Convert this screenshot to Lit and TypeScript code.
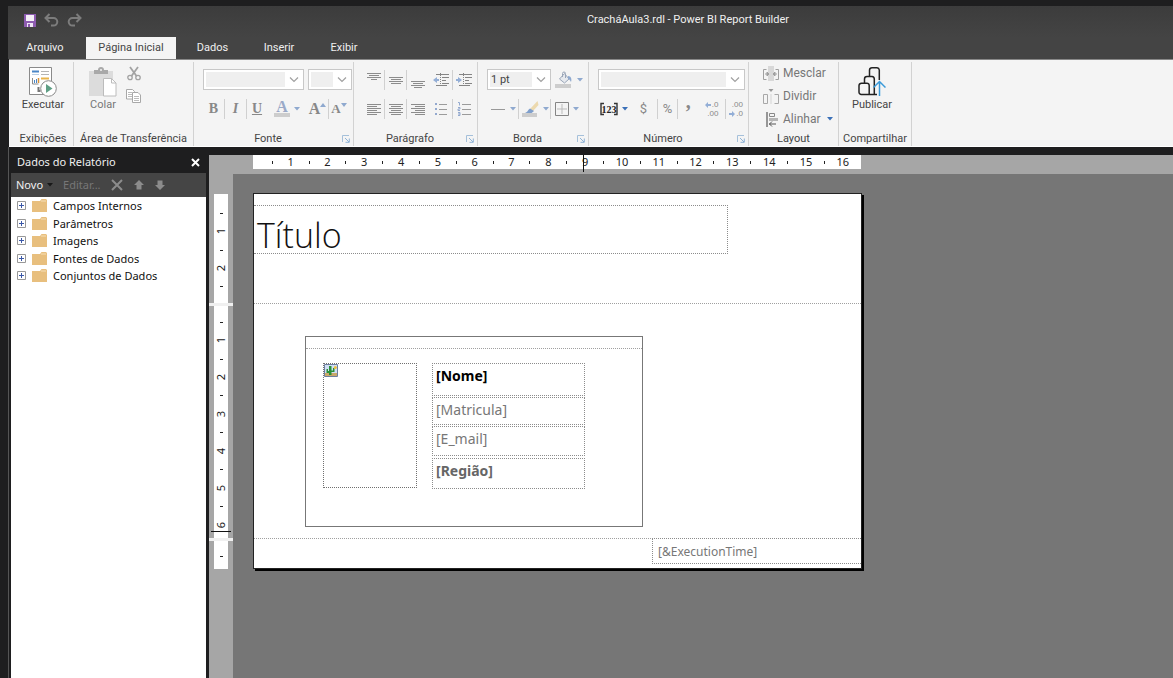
import { LitElement, html, svg, css, nothing } from "lit";
import { customElement, property } from "lit/decorators.js";

const caret = (on = false) =>
  html`<svg class=${on ? "caret on" : "caret"} width="6" height="4" viewBox="0 0 6 4" aria-hidden="true"><path d="M0 0h6L3 3.5z" /></svg>`;

const icon = (w: number, h: number, body: unknown) =>
  html`<svg width=${w} height=${h} viewBox="0 0 ${w} ${h}" fill="none" aria-hidden="true">${body}</svg>`;

const lines = (rows: Array<[number, number, number]>) =>
  icon(16, 16, rows.map(([y, x1, x2]) => svg`<path d="M${x1} ${y}.5H${x2}" stroke="#8c8c8c" />`));

const icons = {
  save: icon(12, 13, svg`<path d="M0 0h12v13H0z" fill="#8d5bb0"/><path d="M2 1h8v6H2z" fill="#f5f0f8"/><path d="M3 9h6v4H3z" fill="#efe6f5"/><path d="M4 10h2v3H4z" fill="#8d5bb0"/>`),
  undo: icon(15, 14, svg`<path d="M5.500 1 1.500 5l4 4M2 5h7.500a3.800 3.800 0 0 1 0 7.600H7" stroke="#7c7c7c" stroke-width="2"/>`),
  redo: icon(15, 14, svg`<path d="M9.500 1l4 4-4 4M13 5H5.500a3.800 3.800 0 0 0 0 7.600H8" stroke="#7c7c7c" stroke-width="2"/>`),
  run: icon(28, 30, svg`<path d="M.5.5h22v27H.5z" fill="#fff" stroke="#8a8a8a"/><path d="M3 4.500h7" stroke="#4a86c7" stroke-width="2"/><path d="M3 7.500h7" stroke="#b8cfe8"/><path d="M12 4.500h8M12 7.500h8" stroke="#b5b5b5"/><path d="M3.500 11v6h6" stroke="#8a8a8a"/><path d="M5.500 16v-3M7.500 16v-4" stroke="#4a86c7"/><path d="M9.500 16v-5" stroke="#d9923a" stroke-width="1.500"/><path d="M12 11.500h8" stroke="#e9b44c" stroke-width="2"/><path d="M9.500 20v4h2" stroke="#777" stroke-width="2"/><circle cx="19.500" cy="21.500" r="7.800" fill="#fff" stroke="#8a8a8a"/><path d="M17 17v9l6.500-4.500z" fill="#5f9f86"/>`),
  paste: icon(28, 30, svg`<path d="M0 4h24v25H0z" fill="#dcdcdc"/><path d="M5 3h4a3 3 0 0 1 6 0h4v4H5z" fill="#a9a9a9"/><circle cx="12" cy="3" r="1" fill="#f4f4f4"/><path d="M14.500 11.500h8l4.500 4.500v13H14.500z" fill="#fff" stroke="#bcbcbc"/><path d="M22.500 11.500V16H27" stroke="#bcbcbc"/>`),
  cut: icon(14, 15, svg`<path d="M3 1l6.500 9M11 1L4.500 10" stroke="#a2a2a2" stroke-width="1.800"/><circle cx="3" cy="11.500" r="2.200" stroke="#a2a2a2" stroke-width="1.300"/><circle cx="11" cy="11.500" r="2.200" stroke="#a2a2a2" stroke-width="1.300"/>`),
  copy: icon(16, 14, svg`<path d="M.5.5h6l2 2v7.500h-8z" fill="#fff" stroke="#a8a8a8"/><path d="M2 3.500h4M2 5.500h4M2 7.500h4" stroke="#bcbcbc"/><path d="M6.500 3.500h5.500l2.500 2.500v7.500h-8z" fill="#fff" stroke="#a8a8a8"/><path d="M8 7.500h5M8 9.500h5M8 11.500h5" stroke="#bcbcbc"/>`),
  launcher: icon(8, 8, svg`<path d="M.5 7V.5H7" stroke="#a5c0da"/><path d="M3 3l4 4M7.300 3.500v3.800H3.500" stroke="#8fb3d6"/>`),
  top: lines([[1, 1, 15], [3, 3, 13], [5, 1, 15], [7, 5, 11]]),
  middle: lines([[5, 1, 15], [7, 3, 13], [9, 1, 15], [11, 3, 13]]),
  bottom: lines([[9, 1, 15], [11, 3, 13], [13, 1, 15], [15, 4, 12]]),
  left: lines([[3, 1, 15], [5, 1, 11], [7, 1, 15], [9, 1, 11], [11, 1, 15], [13, 1, 11]]),
  center: lines([[3, 1, 15], [5, 3, 13], [7, 1, 15], [9, 3, 13], [11, 1, 15], [13, 3, 13]]),
  right: lines([[3, 1, 15], [5, 5, 15], [7, 1, 15], [9, 5, 15], [11, 1, 15], [13, 5, 15]]),
  outdent: icon(16, 16, svg`<path d="M3 2.500h13M9 5.500h7M9 8.500h4M9 11.500h7M3 13.500h11" stroke="#858585"/><path d="M7.500 1v14" stroke="#858585" stroke-dasharray="1 1"/><path d="M0 8l4-3v2h2v2H4v2z" fill="#93aed6"/>`),
  indent: icon(16, 16, svg`<path d="M3 2.500h13M9 5.500h7M9 8.500h4M9 11.500h7M3 13.500h11" stroke="#858585"/><path d="M7.500 1v14" stroke="#858585" stroke-dasharray="1 1"/><path d="M6 8L2 5v2H0v2h2v2z" fill="#93aed6"/>`),
  bullets: icon(14, 14, svg`<path d="M1 1h2v2H1zM1 6h2v2H1zM1 11h2v2H1z" fill="#93a9cf"/><path d="M5 2.500h8M5 7.500h8M5 12.500h8" stroke="#9b9b9b"/>`),
  numbers: icon(14, 14, svg`<path d="M1 .5h1.500v3M1 5.500h2v1.500H1v1.500h2M1 10.500h2v3H1M1 12h2" stroke="#93a9cf"/><path d="M5 2.500h9M5 7.500h9M5 12.500h9" stroke="#9b9b9b"/>`),
  fill: icon(18, 17, svg`<path d="M4.500 8l5-5.500 4.500 5.500-4.500 4z" fill="#e6e9ee" stroke="#9aa6b8"/><path d="M7.500 6V2.500a1.500 1.500 0 0 1 3 0V7" stroke="#9aa6b8"/><path d="M13 5c3 0 4 3 3 6-1-2-2-3-3-3z" fill="#8fa9cf"/><path d="M0 13h16v4H0z" fill="#cdcdcd"/>`),
  line: icon(16, 16, svg`<path d="M1 8.500h14" stroke="#999"/>`),
  pen: icon(18, 17, svg`<path d="M16.500 0l1 4-5.500 6-3-2z" fill="#ecd9ae"/><path d="M9 7.500l4 2.500c-2 2.500-5 3-9 2 3-1 3-3.500 5-4.500z" fill="#7f9fcc"/><path d="M1 12h15v4H1z" fill="#cdcdcd"/>`),
  borders: icon(14, 14, svg`<path d="M.5.5h13v13H.5z" stroke="#858585"/><path d="M7 2v10M2 7h10" stroke="#bbb"/>`),
  bracket: icon(18, 14, svg`<path d="M4 1.500H1v11h3M14 1.500h3v11h-3" stroke="#333" stroke-width="1.400"/><text x="9" y="11" text-anchor="middle" font-family="Liberation Serif, serif" font-weight="700" font-size="10" fill="#222">123</text>`),
  moreLeft: icon(6, 6, svg`<path d="M0 3l3-3v2h3v2H3v2z" fill="#93aed6"/>`),
  moreRight: icon(6, 6, svg`<path d="M6 3L3 0v2H0v2h3v2z" fill="#93aed6"/>`),
  merge: icon(16, 15, svg`<path d="M5 0h6v15H5z" fill="#d8d8d8"/><path d="M3.500 3.500h-3v10h3M12.500 3.500h3v10h-3" stroke="#a0a0a0"/><path d="M2 8h3M14 8h-3M4 6l2 2-2 2zM12 6l-2 2 2 2z" fill="#a0a0a0" stroke="#a0a0a0"/>`),
  split: icon(16, 15, svg`<path d="M.5 5.500h4v9h-4zM11.500 14.500h4v-9h-4" stroke="#a8a8a8"/><path d="M5.500 0h5L8 3z" fill="#999"/><path d="M8 5v10" stroke="#d4d4d4"/>`),
  align: icon(16, 15, svg`<path d="M4 0v15" stroke="#777" stroke-width="1.500"/><path d="M6.500 1.500h5v3h-5z" stroke="#888"/><path d="M6 6h9v3H6z" fill="#b5b5b5"/><path d="M6 12h7M9 9.500L6.500 12 9 14.500" stroke="#555"/>`),
  publish: icon(28, 30, svg`<path d="M11.500 10V3A2.500 2.500 0 0 1 14 .8h5A2.500 2.500 0 0 1 21.300 3v10M6.500 16.500v-4.500A2.500 2.500 0 0 1 9 9.500h5A2.500 2.500 0 0 1 16.300 12v15.300M11.200 27.500v-9a2.300 2.300 0 0 0-2.300-2.200H3.500A2.500 2.500 0 0 0 1 18.500V25a2.300 2.300 0 0 0 2.500 2.500H19" stroke="#222" stroke-width="1.500"/><path d="M21.500 29V14.500M15.500 20.500l6-6 6 6" stroke="#3a9ad9" stroke-width="1.500"/>`),
  remove: icon(12, 12, svg`<path d="M1 1l10 10M11 1L1 11" stroke="#8c8c8c" stroke-width="2"/>`),
  up: icon(10, 10, svg`<path d="M5 0l5 5H7.500v4.500h-5V5H0z" fill="#8c8c8c"/>`),
  down: icon(10, 10, svg`<path d="M5 10l5-5H7.500V.5h-5V5H0z" fill="#8c8c8c"/>`),
  close: icon(9, 9, svg`<path d="M1 1l7 7M8 1L1 8" stroke="#fff" stroke-width="2"/>`),
  plus: icon(9, 9, svg`<path d="M.5.5h8v8h-8z" fill="#fff" stroke="#989898"/><path d="M2 4.500h5M4.500 2v5" stroke="#3b58a8"/>`),
  folder: icon(15, 13, svg`<path d="M0 2h8l1.500-2H14l1 1v12H0z" fill="#e8bf7e"/><path d="M9 2h5" stroke="#f6dfb6"/>`),
  image: icon(14, 13, svg`<path d="M.5.5h13v12H.5z" fill="#cfe0f5" stroke="#6f7f9f"/><path d="M1 9h12v3H1z" fill="#c9a86a"/><path d="M5 2h2.500v9H5zM2.500 5H4v2h1v2H2.500zM9 4h1.500v4H7V6.500h2z" fill="#2a9038"/><circle cx="11.300" cy="3.500" r="1.500" fill="#f0c040"/>`),
};

@customElement("rb-combo")
class RbCombo extends LitElement {
  @property() label = "";
  @property() value = "";
  static styles = css`
    :host { display: grid; height: 21px; box-sizing: border-box; border: 1px solid #c8c8c8; background: #fff; align-items: center; }
    select { grid-area: 1 / 1; appearance: none; box-sizing: border-box; width: 100%; height: 19px; border: 2px solid #fff; border-right: 18px solid #fff; border-radius: 0; background: #efefef; font: inherit; color: #444; padding: 0 0 0 1px; margin: 0; min-width: 0; }
    svg { grid-area: 1 / 1; justify-self: end; margin-right: 4px; pointer-events: none; }
  `;
  render() {
    return html`<select aria-label=${this.label}><option>${this.value}</option></select>
      ${icon(10, 6, svg`<path d="M1 .5l4 4 4-4" stroke="#a0a0a0" stroke-width="1.200"/>`)}`;
  }
}

@customElement("rb-group")
class RbGroup extends LitElement {
  @property() label = "";
  @property({ type: Boolean }) launcher = false;
  static styles = css`
    :host { display: flex; flex-direction: column; flex: none; box-sizing: border-box; border-right: 1px solid #d2d2d2; margin-top: 2px; }
    .content { flex: 1; min-height: 0; }
    .foot { display: flex; align-items: center; height: 14px; line-height: 14px; color: #444; white-space: nowrap; }
    .name { flex: 1; text-align: center; }
    button { display: flex; border: 0; padding: 0; margin: 0 3px 0 0; background: none; }
  `;
  render() {
    return html`<div class="content"><slot></slot></div>
      <div class="foot"><span class="name">${this.label}</span>
      ${this.launcher ? html`<button aria-label="Mais opções: ${this.label}">${icons.launcher}</button>` : nothing}</div>`;
  }
}

@customElement("rb-ruler")
class RbRuler extends LitElement {
  @property({ type: Number }) ticks = 0;
  @property({ type: Boolean, reflect: true }) vertical = false;
  static styles = css`
    :host { display: flex; background: #fff; color: #222; font-size: 11px; line-height: 14px; box-sizing: border-box; padding: 0 9px 0 10px; }
    :host([vertical]) { flex-direction: column; padding: 10px 0 7px; }
    .tick { flex: 1 1 0; min-width: 0; min-height: 0; display: flex; align-items: center; justify-content: center; }
    .dot { width: 1px; height: 3px; background: #222; }
    :host([vertical]) .dot { width: 3px; height: 1px; }
    :host([vertical]) .num { writing-mode: vertical-rl; transform: rotate(180deg); }
  `;
  render() {
    return Array.from({ length: this.ticks }, (_, i) =>
      html`<span class="tick">${i % 2 ? html`<span class="num">${(i + 1) / 2}</span>` : html`<span class="dot"></span>`}</span>`);
  }
}

@customElement("app-root")
class AppRoot extends LitElement {
  static styles = css`
    :host { display: flex; flex-direction: column; box-sizing: border-box; min-height: 100vh; padding: 6px 0 0 8px; background: #1e1e1f; font-family: "Noto Sans", "Open Sans", sans-serif; font-size: 11px; line-height: 16px; color: #444; overflow: hidden; }
    button { font: inherit; color: inherit; border: 0; padding: 0; margin: 0; background: none; display: flex; align-items: center; justify-content: center; }
    .chrome, .ribbon { font-family: Roboto, "Noto Sans", sans-serif; }
    .chrome { background: linear-gradient(#3c3c3c, #444 60%); color: #f0f0f0; }
    .title { display: flex; align-items: center; height: 28px; }
    .quick { display: flex; gap: 8px; width: 179px; padding-left: 16px; align-items: center; }
    .title h1 { flex: 1; margin: 0; text-align: center; font-size: 11px; font-weight: 400; }
    .tabs { display: flex; padding: 3px 0 0 0; }
    .tab { height: 22px; color: #f0f0f0; }
    .file { width: 74px; margin-right: 4px; }
    .tab.on { width: 90px; background: #f4f4f4; color: #444; }
    .data { width: 73px; } .insert { width: 60px; } .view { width: 70px; }
    .ribbon { display: flex; height: 88px; box-sizing: border-box; background: #f4f4f4; border-top: 1px solid #888; border-bottom: 1px solid #fff; margin-left: 1px; }
    .g1 { width: 65px; padding-left: 4px; } .g2 { width: 120px; } .g3 { width: 160px; } .g4 { width: 124px; }
    .g5 { width: 111px; } .g6 { width: 160px; } .g7 { width: 90px; } .g8 { width: 73px; }
    .big { flex-direction: column; width: 100%; padding-top: 5px; }
    .g8 .big { padding-right: 6px; }
    .clip { display: flex; padding-left: 12px; gap: 6px; color: #777; }
    .clip .big { width: 34px; }
    .stack { display: flex; flex-direction: column; gap: 8px; padding-top: 4px; }
    .row { display: flex; align-items: center; }
    .combos { padding: 7px 0 0 9px; height: 21px; }
    .gapped { gap: 4px; }
    .tools { padding: 8px 0 0 9px; height: 22px; }
    .tool { height: 20px; gap: 4px; color: #888; }
    .sep { border-right: 1px solid #d0d0d0; box-sizing: border-box; }
    .serif { font-family: "Liberation Serif", serif; font-weight: 700; font-size: 14px; }
    .i { font-style: italic; } .u { text-decoration: underline; }
    .caret { fill: #8fa9cf; flex: none; } .caret.on { fill: #3a70b8; }
    .w20 { width: 20px; } .w22 { width: 22px; } .w24 { width: 24px; } .w28 { width: 28px; } .w32 { width: 32px; } .w40 { width: 40px; }
    .fontcolor { color: #9aa9c8; font-size: 16px; line-height: 12px; border-bottom: 4px solid #cdcdcd; padding: 0 2px; }
    .grow { font-size: 16px; } .shrink { font-size: 13px; }
    .grow, .shrink { gap: 0; }
    .mini { fill: #8fa9cf; align-self: flex-start; margin-top: 4px; flex: none; }
    .wide { width: 147px; } .font { width: 101px; } .size { width: 44px; } .point { width: 64px; }
    .sign { font-size: 13px; }
    .comma { font-size: 20px; line-height: 20px; padding-top: 6px; box-sizing: border-box; }
    .dec { display: flex; flex-direction: column; font-family: "Liberation Sans", sans-serif; font-size: 8px; line-height: 9px; }
    .dec span { display: flex; align-items: center; justify-content: flex-end; gap: 1px; }
    .layout { display: flex; flex-direction: column; gap: 3px; padding: 1px 0 0 14px; align-items: flex-start; }
    .layout button { height: 20px; gap: 4px; color: #777; font-size: 12px; }
    .body { display: flex; flex: 1; padding-top: 4px; border-left: 1px solid #555; }
    .panel { width: 195px; margin: 0 3px 0 2px; display: flex; flex-direction: column; flex: none; }
    .head { display: flex; justify-content: space-between; align-items: center; height: 22px; padding: 0 6px; color: #f0f0f0; }
    .head h2 { font-size: 11px; font-weight: 400; margin: 0; }
    .bar { display: flex; align-items: center; height: 24px; background: #454545; padding-left: 5px; color: #f0f0f0; }
    .bar button { margin-right: 11px; gap: 4px; }
    .bar button:first-child, .bar .off { margin-right: 10px; }
    .bar .off { color: #777; }
    .bar .caret { fill: #181818; }
    .tree { flex: 1; margin: 0; padding: 0 0 0 6px; background: #fff; color: #111; list-style: none; }
    .tree li { display: flex; align-items: center; height: 17px; line-height: 17px; padding-bottom: 1px; }
    .tree li:nth-child(2n) { padding-bottom: 0; }
    .tree li svg { margin-right: 6px; }
    .designer { flex: 1; display: grid; grid-template: 19px 1fr / 24px 1fr; background: #a6a6a6; margin-top: 4px; min-width: 0; }
    .hr { grid-area: 1 / 2; position: relative; padding-left: 20px; }
    .hr rb-ruler { width: 608px; height: 14px; }
    .vr { grid-area: 2 / 1; position: relative; padding: 20px 5px 0; }
    .seg1 { height: 109px; } .seg2 { height: 232px; } .seg3 { height: 28px; }
    .vr .seg2 { padding: 7px 0 4px; }
    .seg1, .seg2, .seg3 { width: 14px; }
    .gap { height: 3px; background: #f0f0f0; margin: 0 -5px; }
    .mx { position: absolute; left: 350px; top: 0; width: 1px; height: 17px; background: #111; }
    .my { position: absolute; top: 357px; left: 2px; width: 20px; height: 1px; background: #111; }
    .canvas { grid-area: 2 / 2; background: #767676; padding: 19px 0 0 20px; }
    .page { position: relative; width: 607px; height: 374px; border: 1px solid #222; background: #fff; box-shadow: 2px 2px 0 #000; color: #777; }
    .item, .rule { position: absolute; box-sizing: border-box; }
    .item { border: 1px dotted #8c8c8c; white-space: nowrap; }
    .rule { height: 0; border-top: 1px dotted #a0a0a0; left: 0; right: 0; }
    .heading { left: 0; top: 11px; width: 474px; height: 49px; border-left: 0; font: 300 34px/58px "Open Sans", sans-serif; color: #111; padding-left: 3px; }
    .r1 { top: 109px; } .r2 { top: 344px; } .r3 { top: 11px; }
    .card { left: 51px; top: 142px; width: 338px; height: 191px; border: 1px solid #777; }
    .photo { left: 17px; top: 26px; width: 94px; height: 125px; border-color: #707070; }
    .photo svg { display: block; }
    .field { left: 126px; width: 153px; padding-left: 3px; font-size: 14px; line-height: 24px; }
    .f1 { top: 26px; height: 33px; font-weight: 700; color: #000; }
    .f2 { top: 60px; height: 28px; }
    .f3 { top: 89px; height: 30px; }
    .f4 { top: 121px; height: 31px; font-weight: 700; color: #666; }
    .time { left: 398px; right: 0; top: 344px; height: 26px; border-right: 0; padding-left: 5px; font-size: 12px; line-height: 25px; }
  `;

  render() {
    const tool = (name: string, body: unknown, cls: string) =>
      html`<button class="tool ${cls}" aria-label=${name} title=${name}>${body}</button>`;
    const mini = (d: string) => html`<svg class="mini" width="6" height="4" viewBox="0 0 6 4" aria-hidden="true"><path d=${d} /></svg>`;
    const folders = ["Campos Internos", "Parâmetros", "Imagens", "Fontes de Dados", "Conjuntos de Dados"];
    return html`
      <header class="chrome">
        <div class="title">
          <div class="quick">
            <button aria-label="Salvar">${icons.save}</button>
            <button aria-label="Desfazer">${icons.undo}</button>
            <button aria-label="Refazer">${icons.redo}</button>
          </div>
          <h1>CracháAula3.rdl - Power BI Report Builder</h1>
        </div>
        <nav class="tabs">
          <button class="tab file">Arquivo</button>
          <button class="tab on">Página Inicial</button>
          <button class="tab data">Dados</button>
          <button class="tab insert">Inserir</button>
          <button class="tab view">Exibir</button>
        </nav>
      </header>
      <section class="ribbon">
        <rb-group class="g1" label="Exibições"><button class="big">${icons.run}Executar</button></rb-group>
        <rb-group class="g2" label="Área de Transferência">
          <div class="clip"><button class="big">${icons.paste}Colar</button>
            <div class="stack"><button aria-label="Recortar">${icons.cut}</button><button aria-label="Copiar">${icons.copy}</button></div></div>
        </rb-group>
        <rb-group class="g3" label="Fonte" launcher>
          <div class="row combos gapped"><rb-combo class="font" label="Fonte"></rb-combo><rb-combo class="size" label="Tamanho"></rb-combo></div>
          <div class="row tools">
            ${tool("Negrito", "B", "serif sep w22")}${tool("Itálico", "I", "serif i sep w22")}${tool("Sublinhado", "U", "serif u w20")}
            ${tool("Cor", html`<span class="fontcolor">A</span>${caret()}`, "serif w40")}
            ${tool("Aumentar", html`A${mini("M0 4h6L3 0z")}`, "serif grow sep w22")}
            ${tool("Diminuir", html`A${mini("M0 0h6L3 4z")}`, "serif shrink w20")}
          </div>
        </rb-group>
        <rb-group class="g4" label="Parágrafo" launcher>
          <div class="row combos">${tool("Superior", icons.top, "sep w22")}${tool("Meio", icons.middle, "sep w22")}${tool("Inferior", icons.bottom, "w22")}${tool("Diminuir recuo", icons.outdent, "w24 sep")}${tool("Aumentar recuo", icons.indent, "w22")}</div>
          <div class="row tools">${tool("Esquerda", icons.left, "sep w22")}${tool("Centro", icons.center, "sep w22")}${tool("Direita", icons.right, "w22")}${tool("Marcadores", icons.bullets, "w24 sep")}${tool("Numeração", icons.numbers, "w22")}</div>
        </rb-group>
        <rb-group class="g5" label="Borda" launcher>
          <div class="row combos gapped"><rb-combo class="point" label="Largura" value="1 pt"></rb-combo>${tool("Preenchimento", html`${icons.fill}${caret()}`, "w28")}</div>
          <div class="row tools">${tool("Estilo", html`${icons.line}${caret()}`, "sep w32")}${tool("Cor da borda", html`${icons.pen}${caret()}`, "sep w32")}${tool("Bordas", html`${icons.borders}${caret()}`, "w32")}</div>
        </rb-group>
        <rb-group class="g6" label="Número" launcher>
          <div class="row combos gapped"><rb-combo class="wide" label="Formato"></rb-combo></div>
          <div class="row tools">
            ${tool("Espaço reservado", html`${icons.bracket}${caret(true)}`, "w32")}
            ${tool("Moeda", "$", "sep sign w28")}${tool("Porcentagem", "%", "sep sign w20")}${tool("Milhar", "’", "serif comma w20")}
            ${tool("Mais casas", html`<span class="dec"><span>${icons.moreLeft}.0</span><span>.00</span></span>`, "sep w28")}
            ${tool("Menos casas", html`<span class="dec"><span>.00</span><span>${icons.moreRight}.0</span></span>`, "w20")}
          </div>
        </rb-group>
        <rb-group class="g7" label="Layout">
          <div class="layout"><button>${icons.merge}Mesclar</button><button>${icons.split}Dividir</button><button>${icons.align}Alinhar&nbsp;${caret(true)}</button></div>
        </rb-group>
        <rb-group class="g8" label="Compartilhar"><button class="big">${icons.publish}Publicar</button></rb-group>
      </section>
      <main class="body">
        <aside class="panel">
          <div class="head"><h2>Dados do Relatório</h2><button aria-label="Fechar">${icons.close}</button></div>
          <div class="bar">
            <button>Novo ${caret()}</button><button class="off">Editar...</button>
            <button aria-label="Excluir">${icons.remove}</button><button aria-label="Mover para cima">${icons.up}</button><button aria-label="Mover para baixo">${icons.down}</button>
          </div>
          <ul class="tree">${folders.map((f) => html`<li>${icons.plus}${icons.folder}${f}</li>`)}</ul>
        </aside>
        <section class="designer">
          <div class="hr"><rb-ruler ticks="32"></rb-ruler><span class="mx"></span></div>
          <div class="vr">
            <rb-ruler class="seg1" vertical ticks="5"></rb-ruler><div class="gap"></div>
            <rb-ruler class="seg2" vertical ticks="12"></rb-ruler><div class="gap"></div>
            <rb-ruler class="seg3" vertical ticks="1"></rb-ruler><span class="my"></span>
          </div>
          <div class="canvas">
            <article class="page">
              <div class="item heading">Título</div>
              <div class="rule r1"></div>
              <div class="item card">
                <div class="rule r3"></div>
                <div class="item photo">${icons.image}</div>
                <div class="item field f1">[Nome]</div>
                <div class="item field f2">[Matricula]</div>
                <div class="item field f3">[E_mail]</div>
                <div class="item field f4">[Região]</div>
              </div>
              <div class="rule r2"></div>
              <div class="item time">[&amp;ExecutionTime]</div>
            </article>
          </div>
        </section>
      </main>
    `;
  }
}
